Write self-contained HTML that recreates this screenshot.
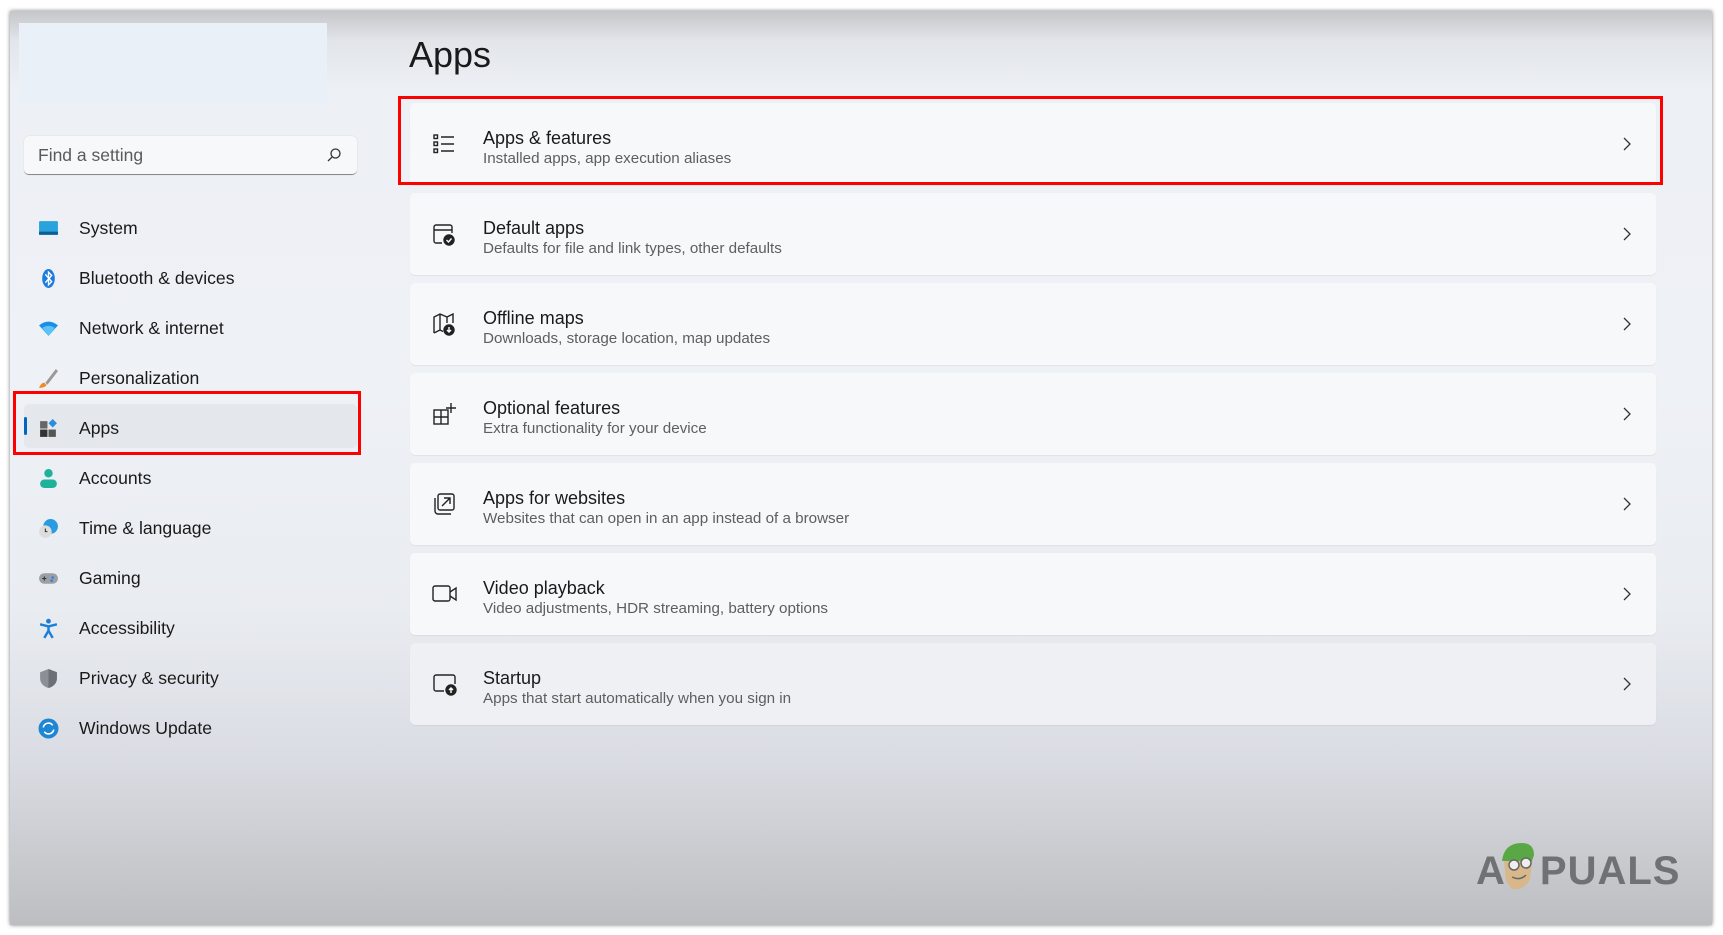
<!DOCTYPE html>
<html><head><meta charset="utf-8"><style>
*{margin:0;padding:0;box-sizing:border-box}
body{width:1723px;height:935px;background:#fff;position:relative;overflow:hidden;font-family:"Liberation Sans",sans-serif;color:#1a1a1a}
#win{position:absolute;left:10px;top:11px;width:1702px;height:914px;box-shadow:0 0 4px rgba(0,0,0,.5);
background:linear-gradient(180deg,#c4c6ca 0px,#e2e5ea 30px,#edf0f5 80px,#eef1f6 380px,#e9ecf1 600px,#d9dce2 750px,#c6c8cc 860px,#bcbec2 914px)}
.abs{position:absolute}
#logo{left:9px;top:12px;width:308px;height:81px;background:#eaf0f7}
#search{left:14px;top:125px;width:333px;height:39px;background:#f7f8fa;border-radius:5px;border-bottom:1px solid #8a8a8a;box-shadow:0 0 1px rgba(0,0,0,.2);font-size:17.5px;color:#5a5a5a;padding:9px 0 0 14px}
.nav{position:absolute;left:69px;font-size:17.6px;color:#1a1a1a}
.ic{position:absolute;left:28px;width:21px;height:21px}
#sel{left:14px;top:393px;width:333px;height:44px;background:#e4e7ec;border-radius:5px}
#selbar{left:14px;top:406px;width:3px;height:18px;background:#0067c0;border-radius:2px}
.red{position:absolute;border:3px solid #f00}
h1{position:absolute;left:399px;top:23px;font-size:36px;font-weight:normal;color:#1a1a1a}
.card{position:absolute;left:400px;width:1246px;height:82px;background:#f7f8fa;border-radius:5px;box-shadow:0 1px 1px rgba(0,0,0,.06)}
.card .t{position:absolute;left:73px;top:25px;font-size:18px;color:#1a1a1a}
.card .s{position:absolute;left:73px;top:47px;font-size:15.2px;color:#5e5e5e}
.card svg.i{position:absolute;left:22px;top:29px}
.card .ch{position:absolute;right:24px;top:33px}
</style></head><body>
<div id="win">
<div id="logo" class="abs"></div>
<div id="search" class="abs">Find a setting
<svg class="abs" style="left:302px;top:11px" width="16" height="16" viewBox="0 0 16 16"><circle cx="9.5" cy="6.5" r="4.5" fill="none" stroke="#333" stroke-width="1.3"/><line x1="6.3" y1="9.8" x2="2" y2="14" stroke="#333" stroke-width="1.3"/></svg></div>

<div id="sel" class="abs"></div><div id="selbar" class="abs"></div>
<div class="red" style="left:3px;top:380px;width:348px;height:64px"></div>

<svg class="ic" style="top:207px" viewBox="0 0 20 20"><rect x="1" y="3" width="18" height="13" rx="1" fill="#2aa3dc"/><rect x="1" y="13" width="18" height="3" fill="#0b5f94"/></svg>
<div class="nav" style="top:207px">System</div>
<svg class="ic" style="top:257px" viewBox="0 0 20 20"><ellipse cx="10" cy="10" rx="6" ry="9" fill="#1e7be0"/><path d="M7 6l6 7-3 3V4l3 3-6 7" fill="none" stroke="#fff" stroke-width="1.3"/></svg>
<div class="nav" style="top:257px">Bluetooth &amp; devices</div>
<svg class="ic" style="top:307px" viewBox="0 0 20 20"><path d="M1 7q9-7 18 0L10 17z" fill="#1d8ee8"/><path d="M4 9.5q6-4 12 0L10 17z" fill="#5cc3f5"/></svg>
<div class="nav" style="top:307px">Network &amp; internet</div>
<svg class="ic" style="top:357px" viewBox="0 0 20 20"><path d="M17 1L7 14l2 2L19 3z" fill="#999"/><path d="M6 14c-3 0-4 3-5 5 3 0 7-1 7-3z" fill="#f08a24"/></svg>
<div class="nav" style="top:357px">Personalization</div>
<svg class="ic" style="top:407px" viewBox="0 0 20 20"><rect x="2" y="3" width="7" height="7" fill="#666"/><rect x="2" y="11" width="7" height="7" fill="#333"/><rect x="10" y="11" width="7" height="7" fill="#555"/><path d="M14 1l4 4-4 4-4-4z" fill="#2a8ee0"/></svg>
<div class="nav" style="top:407px">Apps</div>
<svg class="ic" style="top:457px" viewBox="0 0 20 20"><circle cx="10" cy="5" r="4" fill="#1fb29a"/><rect x="2" y="11" width="16" height="8" rx="4" fill="#1fb29a"/></svg>
<div class="nav" style="top:457px">Accounts</div>
<svg class="ic" style="top:507px" viewBox="0 0 20 20"><circle cx="12" cy="8" r="7" fill="#2a9be0"/><circle cx="7" cy="13" r="6" fill="#ddd"/><path d="M7 10v3h2" stroke="#333" fill="none"/></svg>
<div class="nav" style="top:507px">Time &amp; language</div>
<svg class="ic" style="top:557px" viewBox="0 0 20 20"><rect x="1" y="5" width="18" height="10" rx="5" fill="#9ca0a6"/><path d="M4 10h4M6 8v4" stroke="#333"/><circle cx="14" cy="9" r="1.2" fill="#2a7fd8"/><circle cx="13" cy="12" r="1.2" fill="#2a7fd8"/></svg>
<div class="nav" style="top:557px">Gaming</div>
<svg class="ic" style="top:607px" viewBox="0 0 20 20"><circle cx="10" cy="3" r="2.3" fill="#1a7fd6"/><path d="M2 6l8 2 8-2M10 8v4l-4 7M10 12l4 7" stroke="#1a7fd6" stroke-width="2.3" fill="none"/></svg>
<div class="nav" style="top:607px">Accessibility</div>
<svg class="ic" style="top:657px" viewBox="0 0 20 20"><path d="M10 1l8 3v6c0 5-4 8-8 9-4-1-8-4-8-9V4z" fill="#8c9096"/><path d="M10 1l8 3v6c0 5-4 8-8 9z" fill="#6d7177"/></svg>
<div class="nav" style="top:657px">Privacy &amp; security</div>
<svg class="ic" style="top:707px" viewBox="0 0 20 20"><circle cx="10" cy="10" r="9.5" fill="#1f86d4"/><path d="M5 9a5 5 0 0 1 9-2M15 11a5 5 0 0 1-9 2" stroke="#fff" stroke-width="1.5" fill="none"/></svg>
<div class="nav" style="top:707px">Windows Update</div>

<h1>Apps</h1>

<div class="card" style="top:92px"><svg class="i" width="24" height="24" viewBox="0 0 24 24" fill="none" stroke="#222" stroke-width="1.4"><rect x="2" y="3" width="3.5" height="3.5"/><rect x="2" y="10" width="3.5" height="3.5"/><rect x="2" y="17" width="3.5" height="3.5"/><path d="M9 5h13M9 12h13M9 19h13"/></svg><div class="t">Apps &amp; features</div><div class="s">Installed apps, app execution aliases</div><svg class="ch" width="10" height="16" viewBox="0 0 10 16"><path d="M2 2l6 6-6 6" fill="none" stroke="#333" stroke-width="1.3"/></svg></div>
<div class="red" style="left:388px;top:85px;width:1265px;height:89px"></div>

<div class="card" style="top:182px"><svg class="i" width="24" height="24" viewBox="0 0 24 24" fill="none" stroke="#222" stroke-width="1.4"><path d="M10 21H4a2 2 0 0 1-2-2V5a2 2 0 0 1 2-2h14a2 2 0 0 1 2 2v6M2 8h18"/><circle cx="17" cy="18" r="5" fill="#222"/><path d="M14.5 18l2 2 3-3.5" stroke="#fff"/></svg><div class="t">Default apps</div><div class="s">Defaults for file and link types, other defaults</div><svg class="ch" width="10" height="16" viewBox="0 0 10 16"><path d="M2 2l6 6-6 6" fill="none" stroke="#333" stroke-width="1.3"/></svg></div>

<div class="card" style="top:272px"><svg class="i" width="24" height="24" viewBox="0 0 24 24" fill="none" stroke="#222" stroke-width="1.4"><path d="M2 21V5l6-3 7 3 6-3v9M8 2v16M15 5v6M2 21l6-3 3 1.5"/><circle cx="17" cy="18" r="5" fill="#222"/><path d="M17 15v5M15 18l2 2 2-2" stroke="#fff"/></svg><div class="t">Offline maps</div><div class="s">Downloads, storage location, map updates</div><svg class="ch" width="10" height="16" viewBox="0 0 10 16"><path d="M2 2l6 6-6 6" fill="none" stroke="#333" stroke-width="1.3"/></svg></div>

<div class="card" style="top:362px"><svg class="i" width="24" height="24" viewBox="0 0 24 24" fill="none" stroke="#222" stroke-width="1.4"><rect x="2" y="8" width="14" height="14"/><path d="M9 8v14M2 15h14M19 1v10M14 6h10"/></svg><div class="t">Optional features</div><div class="s">Extra functionality for your device</div><svg class="ch" width="10" height="16" viewBox="0 0 10 16"><path d="M2 2l6 6-6 6" fill="none" stroke="#333" stroke-width="1.3"/></svg></div>

<div class="card" style="top:452px"><svg class="i" width="24" height="24" viewBox="0 0 24 24" fill="none" stroke="#222" stroke-width="1.4"><rect x="6" y="2" width="16" height="16" rx="2"/><path d="M3 6v13a3 3 0 0 0 3 3h13M10 14l8-8M12 6h6v6"/></svg><div class="t">Apps for websites</div><div class="s">Websites that can open in an app instead of a browser</div><svg class="ch" width="10" height="16" viewBox="0 0 10 16"><path d="M2 2l6 6-6 6" fill="none" stroke="#333" stroke-width="1.3"/></svg></div>

<div class="card" style="top:542px"><svg class="i" width="26" height="24" viewBox="0 0 26 24" fill="none" stroke="#222" stroke-width="1.4"><rect x="1" y="4" width="17" height="15" rx="2"/><path d="M18 10l6-4v12l-6-4"/></svg><div class="t">Video playback</div><div class="s">Video adjustments, HDR streaming, battery options</div><svg class="ch" width="10" height="16" viewBox="0 0 10 16"><path d="M2 2l6 6-6 6" fill="none" stroke="#333" stroke-width="1.3"/></svg></div>

<div class="card" style="top:632px;background:#eff0f3"><svg class="i" width="26" height="24" viewBox="0 0 26 24" fill="none" stroke="#222" stroke-width="1.4"><path d="M12 19H4a2 2 0 0 1-2-2V5a2 2 0 0 1 2-2h17a2 2 0 0 1 2 2v7"/><circle cx="19" cy="18" r="5" fill="#222"/><path d="M19 21v-5M17 18l2-2 2 2" stroke="#fff"/></svg><div class="t">Startup</div><div class="s">Apps that start automatically when you sign in</div><svg class="ch" width="10" height="16" viewBox="0 0 10 16"><path d="M2 2l6 6-6 6" fill="none" stroke="#333" stroke-width="1.3"/></svg></div>

<div class="abs" style="left:1466px;top:840px;font-size:40px;font-weight:bold;color:#707175;letter-spacing:1px;white-space:nowrap;line-height:1">A<span style="display:inline-block;width:34px"></span>PUALS</div>
<svg class="abs" style="left:1488px;top:830px" width="40" height="52" viewBox="0 0 40 52"><path d="M4 20q2-18 20-18 12 0 12 12l-2 6H6z" fill="#5aa845"/><path d="M6 20h28l-2 18q-6 12-18 10L8 40z" fill="#d8b88a"/><circle cx="16" cy="24" r="5" fill="#eee" stroke="#666" stroke-width="1.5"/><circle cx="28" cy="22" r="5" fill="#eee" stroke="#666" stroke-width="1.5"/><path d="M14 36q8 4 14-2" stroke="#666" stroke-width="1.5" fill="none"/></svg>
</div>
</body></html>
